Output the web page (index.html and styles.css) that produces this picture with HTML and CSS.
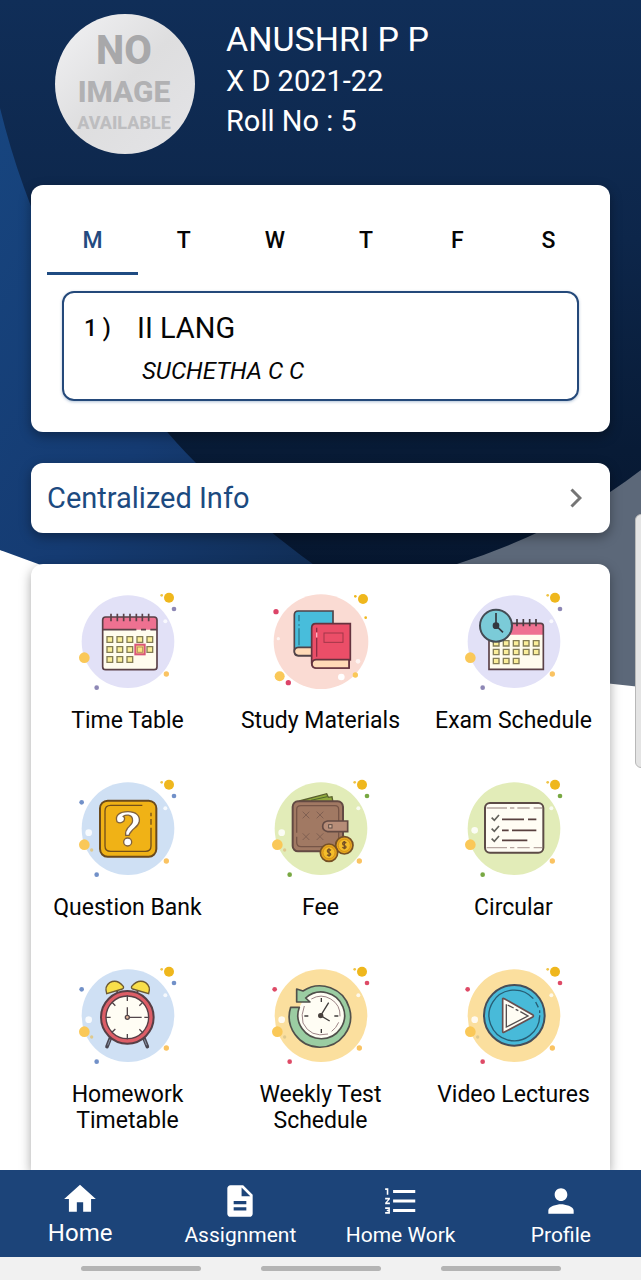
FILE: index.html
```html
<!DOCTYPE html>
<html lang="en">
<head>
<meta charset="utf-8">
<meta name="viewport" content="width=device-width, initial-scale=1">
<title>Student Home</title>
<link rel="stylesheet" href="styles.css">
</head>
<body>
<svg class="defs" aria-hidden="true">
  <defs>
    <symbol id="bubble" viewBox="0 0 420 360" overflow="visible">
      <circle cx="203" cy="176" r="139" fill="var(--disc)"/>
      <circle cx="326" cy="44" r="15" fill="#efb71d"/>
      <circle cx="304" cy="37" r="4" fill="#f0c446"/>
      <circle cx="341" cy="78" r="7" fill="var(--dot)"/>
      <circle cx="315" cy="115" r="6" fill="#fff" opacity=".8"/>
      <circle cx="72" cy="224" r="16" fill="#fac858"/>
      <circle cx="318" cy="273" r="8" fill="#fac362"/>
      <circle cx="109" cy="314" r="7" fill="var(--dot)"/>
    </symbol>
    <symbol id="extras" viewBox="0 0 420 360" overflow="visible">
      <circle cx="85" cy="188" r="10" fill="#fff" opacity=".85"/>
      <circle cx="94" cy="240" r="5" fill="#dfc98e"/>
    </symbol>
  </defs>
</svg>
<div class="app">
  <svg class="backdrop" viewBox="0 0 641 700" preserveAspectRatio="none" aria-hidden="true">
    <defs>
      <linearGradient id="navy" x1="0" y1="0" x2="0" y2="1">
        <stop offset="0" stop-color="#102e58"/><stop offset=".4" stop-color="#0d264a"/><stop offset=".75" stop-color="#081b36"/><stop offset="1" stop-color="#06162e"/>
      </linearGradient>
      <linearGradient id="blue" x1="0" y1="0" x2="1" y2="1">
        <stop offset="0" stop-color="#17457f"/><stop offset=".55" stop-color="#153b72"/><stop offset="1" stop-color="#102b50"/>
      </linearGradient>
    </defs>
    <path d="M330 600V450H641V687Q450 670 330 600Z" fill="#5c6879"/>
    <path d="M0 0H641V470Q563 530 457 564L320 600L0 550Z" fill="url(#navy)"/>
    <path d="M0 108C40 270 120 385 195 462Q260 530 350 590L60 572L0 550Z" fill="url(#blue)"/>
  </svg>

  <main class="content">
    <header class="student">
      <svg class="avatar" viewBox="0 0 140 140" role="img" aria-label="No image available">
        <defs><linearGradient id="silver" x1="0" y1="0" x2="1" y2="1"><stop offset="0" stop-color="#f2f2f4"/><stop offset=".5" stop-color="#dededf"/><stop offset="1" stop-color="#e4e4e7"/></linearGradient></defs>
        <circle cx="70" cy="70" r="70" fill="url(#silver)"/>
        <text class="avatar-no" x="69" y="50">NO</text>
        <text class="avatar-image" x="69" y="88">IMAGE</text>
        <text class="avatar-available" x="69" y="115">AVAILABLE</text>
      </svg>
      <div class="details">
        <h1 class="name">ANUSHRI P P</h1>
        <p class="meta">X D 2021-22</p>
        <p class="meta">Roll No : 5</p>
      </div>
    </header>

    <section class="card schedule">
      <div class="days" role="tablist">
        <button class="day active" role="tab" aria-selected="true">M</button>
        <button class="day" role="tab">T</button>
        <button class="day" role="tab">W</button>
        <button class="day" role="tab">T</button>
        <button class="day" role="tab">F</button>
        <button class="day" role="tab">S</button>
      </div>
      <div class="period">
        <span class="number">1 )</span>
        <div>
          <p class="subject">II LANG</p>
          <p class="teacher">SUCHETHA C C</p>
        </div>
      </div>
    </section>

    <a class="card info" href="#info">
      <span>Centralized Info</span>
      <svg class="chevron" viewBox="0 0 12 20" aria-hidden="true"><path d="M1.500 1.500L10 10L1.500 18.500" fill="none" stroke="#757575" stroke-width="3"/></svg>
    </a>

    <nav class="card menu" aria-label="Menu">
      <a class="tile lilac" href="#timetable">
        <svg class="art" viewBox="-7 9 420 360" aria-hidden="true">
          <use href="#bubble" y="9" width="420" height="360"/>
          <rect x="127" y="111" width="163" height="158" rx="9" fill="#fffcee"/>
          <path d="M127 149V120Q127 111 136 111H281Q290 111 290 120V149Z" fill="#ee7191"/>
          <g fill="none" stroke="#5a4148" stroke-width="5"><rect x="127" y="111" width="163" height="158" rx="9"/><path d="M127 149H228M242 149H257M270 149H290"/><path d="M152 101V124M171 101V124M190 101V124M209 101V124M228 101V124M246 101V124M265 101V124"/></g>
          <g fill="#fbef9b" stroke="#847d55" stroke-width="4"><path d="M140 170h17v17h-17zM170 170h17v17h-17zM200 170h17v17h-17zM230 170h17v17h-17zM260 170h17v17h-17zM140 200h17v17h-17zM170 200h17v17h-17zM200 200h17v17h-17zM260 200h17v17h-17zM140 230h17v17h-17zM170 230h17v17h-17zM200 230h17v17h-17z"/></g>
          <rect x="225" y="194" width="28" height="29" fill="#f9e47d" stroke="#d95678" stroke-width="6"/><rect x="231" y="201" width="16" height="16" fill="none" stroke="#b98b62" stroke-width="3"/>
        </svg>
        <span>Time Table</span>
      </a>
      <a class="tile" href="#materials">
        <svg class="art" viewBox="-13 9 420 360" aria-hidden="true">
          <circle cx="197" cy="185" r="142" fill="#fadbd3"/>
          <g fill="#efb71d"><circle cx="323" cy="57" r="15"/><circle cx="300" cy="49" r="4"/><circle cx="331" cy="113" r="4"/></g>
          <g fill="#dc4468"><circle cx="62" cy="95" r="8"/><circle cx="99" cy="308" r="8"/></g>
          <g fill="#fac858"><circle cx="73" cy="289" r="15"/><circle cx="300" cy="285" r="8"/></g>
          <g fill="#fff"><circle cx="258" cy="291" r="10"/><circle cx="308" cy="244" r="7" opacity=".7"/><circle cx="69" cy="176" r="5" opacity=".7"/></g>
          <path d="M117 212V105Q117 93 129 93H233V202L220 227H128Q117 227 117 212Z" fill="#48bddb" stroke="#514348" stroke-width="5"/>
          <path d="M129 202H225V227H129Q117 225 117 214Q117 203 129 202Z" fill="#ffdab7" stroke="#514348" stroke-width="5"/>
          <path d="M169 250V144Q169 131 181 131H285V240H281V264H181Q169 262 169 250Z" fill="#eb4e68" stroke="#65333f" stroke-width="5"/>
          <path d="M182 239H281V264H182Q170 263 170 251Q170 240 182 239Z" fill="#ffdab7" stroke="#65333f" stroke-width="5"/>
          <path d="M131 105V124M131 133V137M131 145V196" stroke="#2c788d" stroke-width="4"/><path d="M184 143V156M184 174V230" stroke="#912d45" stroke-width="4"/><path d="M184 158V172" stroke="#f8b5c3" stroke-width="4"/>
          <rect x="206" y="159" width="57" height="28" fill="none" stroke="#a13648" stroke-width="3"/>
        </svg>
        <span>Study Materials</span>
      </a>
      <a class="tile lilac" href="#exams">
        <svg class="art" viewBox="-7 9 420 360" aria-hidden="true">
          <use href="#bubble" y="9" width="420" height="360"/>
          <path d="M128 130H283Q291 130 291 138V268H128Z" fill="#fffcee"/><path d="M128 130H283Q291 130 291 138V164H128Z" fill="#ee7191"/><path d="M128 130H283Q291 130 291 138V268H128Z" fill="none" stroke="#5a4148" stroke-width="5"/>
          <path d="M212 117V139M231 117V139M250 117V139M269 117V139" stroke="#443a40" stroke-width="5"/>
          <g fill="#fbef9b" stroke="#847d55" stroke-width="4"><path d="M141 182h17v16h-17zM171 182h17v16h-17zM201 182h17v16h-17zM231 182h17v16h-17zM261 182h17v16h-17zM141 208h17v16h-17zM171 208h17v16h-17zM201 208h17v16h-17zM231 208h17v16h-17zM261 208h17v16h-17zM141 235h17v16h-17zM171 235h17v16h-17zM201 235h17v16h-17z"/></g>
          <circle cx="149" cy="137" r="48" fill="#7bcbd8" stroke="#444b54" stroke-width="6"/><circle cx="149" cy="137" r="10" fill="#343840"/><path d="M149 137V99M149 137L170 157" fill="none" stroke="#343840" stroke-width="5"/>
        </svg>
        <span>Exam Schedule</span>
      </a>
      <a class="tile sky" href="#questions">
        <svg class="art" viewBox="-7 0 420 360" aria-hidden="true">
          <use href="#bubble" width="420" height="360"/><use href="#extras" width="420" height="360"/>
          <circle cx="64" cy="97" r="7" fill="#7190c8"/>
          <rect x="119" y="92" width="169" height="168" rx="23" fill="#f0b216" stroke="#6b4a1c" stroke-width="6"/>
          <path d="M246 106H151Q134 106 134 123V228Q134 244 151 244H255Q272 244 272 228V173M272 128V139M272 147V164" fill="none" stroke="#74501a" stroke-width="4"/>
          <path d="M170 155C163 136 178 125 203 125C227 125 239 137 237 154C235 169 222 173 214 183Q207 191 206 196H196Q194 184 203 173C213 162 219 159 216 145C213 134 197 133 189 139Q196 143 190 154Q180 163 170 155Z" fill="#fff" stroke="#80613c" stroke-width="4"/><circle cx="202" cy="216" r="12" fill="#fff" stroke="#80613c" stroke-width="4"/>
        </svg>
        <span>Question Bank</span>
      </a>
      <a class="tile lime" href="#fee">
        <svg class="art" viewBox="-13 0 420 360" aria-hidden="true">
          <use href="#bubble" x="-6" width="420" height="360"/><use href="#extras" x="-6" width="420" height="360"/>
          <path d="M132 93L214 71L219 82L230 80L233 97Z" fill="#91aa3c" stroke="#59602d" stroke-width="4"/><path d="M167 91L216 80" stroke="#4e672d" stroke-width="3"/>
          <rect x="112" y="94" width="151" height="150" rx="16" fill="#a17963" stroke="#634a43" stroke-width="6"/>
          <path d="M124 188V119Q124 107 137 107H239Q250 107 250 119V155M250 187V220Q250 230 239 230H137Q124 230 124 217V200" fill="none" stroke="#765547" stroke-width="4"/>
          <path d="M142 125L162 145M162 125L142 145M184 125L204 145M204 125L184 145M142 190L162 210M162 190L142 210M184 190L204 210M204 190L184 210" stroke="#806052" stroke-width="3"/>
          <path d="M217 153H277V185H217Q202 182 202 169Q202 156 217 153Z" fill="#b78d78" stroke="#634a43" stroke-width="5"/><rect x="220" y="164" width="10" height="10" fill="#d9b49d" stroke="#5d4c44" stroke-width="3"/>
          <g stroke="#765125" stroke-width="5"><circle cx="267" cy="226" r="26" fill="#e6a51e"/><circle cx="221" cy="248" r="26" fill="#e6a51e"/></g>
          <g fill="#f4bd2b" stroke="#c98716" stroke-width="2"><circle cx="267" cy="226" r="18"/><circle cx="221" cy="248" r="18"/></g>
          <path id="cash" d="M273 219Q263 212 262 221Q262 225 267 226Q273 228 272 232Q268 238 261 232M267 213V238" fill="none" stroke="#765125" stroke-width="4"/><use href="#cash" x="-46" y="22"/>
        </svg>
        <span>Fee</span>
      </a>
      <a class="tile lime" href="#circular">
        <svg class="art" viewBox="-7 0 420 360" aria-hidden="true">
          <use href="#bubble" width="420" height="360"/><circle cx="85" cy="181" r="10" fill="#fff" opacity=".85"/>
          <rect x="116" y="99" width="175" height="149" rx="15" fill="#fffdf4" stroke="#5c4b46" stroke-width="6"/>
          <path d="M121 114H182M191 114H204M213 114H250M262 114H287M121 233H182M191 233H204M213 233H250M262 233H287" stroke="#b6a6a0" stroke-width="4"/>
          <path d="M136 143L144 151L158 135M136 176L144 184L158 168M136 206L144 214L158 198" fill="none" stroke="#62605a" stroke-width="5"/><path d="M167 148H233M245 148H270M167 181H187M197 181H270M167 211H243" stroke="#59413f" stroke-width="5"/>
        </svg>
        <span>Circular</span>
      </a>
      <a class="tile sky" href="#homework-timetable">
        <svg class="art" viewBox="-7 0 420 360" aria-hidden="true">
          <use href="#bubble" width="420" height="360"/><use href="#extras" width="420" height="360"/><circle cx="64" cy="97" r="7" fill="#7190c8"/>
          <path d="M151 241L140 269M250 241L261 269" stroke="#4a4651" stroke-width="11" stroke-linecap="round"/><path d="M149 247L142 265M252 247L259 265" stroke="#8792a4" stroke-width="3"/>
          <path d="M169 100L173 111M233 100L228 111" stroke="#51454a" stroke-width="5"/>
          <path d="M139 110Q132 88 148 77Q170 65 189 88Q191 94 186 96ZM265 110Q272 88 256 77Q234 65 214 88Q212 94 217 96Z" fill="#f8df4a" stroke="#6d5a31" stroke-width="4"/>
          <circle cx="201" cy="181" r="72" fill="#fffdf4" stroke="#573f46" stroke-width="20"/><circle cx="201" cy="181" r="71" fill="none" stroke="#dd5e67" stroke-width="10"/>
          <path d="M201 115V132M201 231V247M137 181H151M252 181H266M155 136L165 146M237 217L248 228M155 226L165 216M237 146L248 135M201 181V151M201 181H244" stroke="#52454a" stroke-width="4"/><circle cx="201" cy="181" r="6" fill="#e6b99c" stroke="#52454a" stroke-width="4"/>
        </svg>
        <span>Homework<br>Timetable</span>
      </a>
      <a class="tile sand" href="#tests">
        <svg class="art" viewBox="-13 0 420 360" aria-hidden="true">
          <use href="#bubble" x="-6" width="420" height="360"/><use href="#extras" x="-6" width="420" height="360"/><circle cx="58" cy="97" r="7" fill="#de4a66"/>
          <circle cx="198" cy="175" r="70" fill="#fffdf4"/>
          <path d="M105 151A93 92 0 1 0 147 98L124 96V135H164L151 123A70 70 0 1 1 130 151Z" fill="none"/>
          <path d="M106 151A92 92 0 1 0 143 102L124 96V135H164L151 123A70 70 0 1 1 132 151Z" fill="#9bcda2" stroke="#50504b" stroke-width="5" stroke-linejoin="round"/>
          <path d="M168 126A57 57 0 0 1 254 178M250 196Q242 214 229 223M218 231Q165 243 143 198Q136 174 147 147" fill="none" stroke="#9d8486" stroke-width="3"/>
          <path d="M198 123V135M198 216V228M147 177H159M237 177H249M196 176L220 137M196 176L223 192" stroke="#403c3b" stroke-width="4"/><circle cx="196" cy="176" r="8" fill="#48403c"/>
        </svg>
        <span>Weekly Test<br>Schedule</span>
      </a>
      <a class="tile sand" href="#videos">
        <svg class="art" viewBox="-7 0 420 360" aria-hidden="true">
          <use href="#bubble" width="420" height="360"/><use href="#extras" width="420" height="360"/><circle cx="64" cy="97" r="7" fill="#de4a66"/>
          <circle cx="204" cy="175" r="91" fill="#48bad9" stroke="#454e59" stroke-width="6"/>
          <path d="M261 125A76 76 0 1 0 280 175M268 135L276 151M280 160V168" fill="none" stroke="#275d74" stroke-width="4"/>
          <path d="M169 125Q170 123 174 125L260 174Q263 177 259 180L173 226Q169 228 169 222Z" fill="#fffdf4" stroke="#684f50" stroke-width="5"/><path d="M184 144L202 153M208 157L216 161M222 164L245 177L180 210V142" fill="none" stroke="#544f50" stroke-width="4"/>
        </svg>
        <span>Video Lectures</span>
      </a>
    </nav>
  </main>

  <nav class="bottom-nav" aria-label="Primary">
    <a class="nav-item current" href="#home"><svg class="nav-icon" viewBox="0 0 24 24" aria-hidden="true"><path d="M10 20v-6h4v6h5v-8h3L12 3 2 12h3v8z"/></svg><span>Home</span></a>
    <a class="nav-item" href="#assignment"><svg class="nav-icon" viewBox="0 0 24 24" aria-hidden="true"><path d="M14 2H6c-1.100 0-2 .9-2 2v16c0 1.100.9 2 2 2h12c1.100 0 2-.9 2-2V8l-6-6zm2 16H8v-2h8v2zm0-4H8v-2h8v2zm-3-5V3.500L18.500 9H13z"/></svg><span>Assignment</span></a>
    <a class="nav-item" href="#homework"><svg class="nav-icon" viewBox="0 0 24 24" aria-hidden="true"><path d="M2 17h2v.5H3v1h1v.5H2v1h3v-4H2v1zm1-9h1V4H2v1h1v3zm-1 3h1.800L2 13.100v.9h3v-1H3.200L5 10.900V10H2v1zm5-6v2h14V5H7zm0 14h14v-2H7v2zm0-6h14v-2H7v2z"/></svg><span>Home Work</span></a>
    <a class="nav-item" href="#profile"><svg class="nav-icon" viewBox="0 0 24 24" aria-hidden="true"><path d="M12 12c2.210 0 4-1.790 4-4s-1.790-4-4-4-4 1.790-4 4 1.790 4 4 4zm0 2c-2.670 0-8 1.340-8 4v2h16v-2c0-2.660-5.330-4-8-4z"/></svg><span>Profile</span></a>
  </nav>
  <div class="system-bar"><i class="handle"></i><i class="handle"></i><i class="handle"></i></div>
  <div class="edge-panel"></div>
</div>
</body>
</html>
```
FILE: styles.css
```css
* { box-sizing: border-box; }
body { margin: 0; font-family: Roboto, "Liberation Sans", sans-serif; color: #050505; background: #fff; }
h1, p { margin: 0; font-weight: 400; }
a { color: inherit; text-decoration: none; }
.defs { position: absolute; width: 0; height: 0; }
.app { position: relative; display: flex; flex-direction: column; height: 100vh; overflow: hidden; }
.backdrop { position: absolute; top: 0; left: 0; width: 100%; height: 700px; }
.content { position: relative; flex: 1; min-height: 0; overflow: hidden; display: flex; flex-direction: column; padding: 14px 31px 0; }

.student { display: flex; gap: 31px; padding-left: 24px; margin-bottom: 31px; color: #fff; }
.avatar { width: 140px; height: 140px; flex: none; }
.avatar text { font-weight: 800; fill: #b1b1b3; text-anchor: middle; }
.avatar .avatar-no { font-size: 40px; fill: #a8a8aa; }
.avatar .avatar-image { font-size: 30px; }
.avatar .avatar-available { font-size: 18px; fill: #bdbdbf; }
.details { padding-top: 4px; }
.name { font-size: 34px; line-height: 43px; }
.meta { font-size: 29px; line-height: 40px; }

.card { flex: none; background: #fff; border-radius: 12px; box-shadow: 0 4px 12px rgba(0, 0, 0, .35); }
.schedule { padding: 16px 16px 31px; margin-bottom: 31px; }
.days { display: grid; grid-template-columns: repeat(6, 1fr); margin-bottom: 16px; }
.day { height: 74px; padding: 8px 0 0; border: 0; border-bottom: 3px solid transparent; background: none; font: 500 23px/28px Roboto, sans-serif; color: #050505; }
.day.active { color: #244a80; border-color: #1f4b82; }
.period { display: flex; margin: 0 15px; padding: 16px 20px 10px; border: 2px solid #24497a; border-radius: 12px; box-shadow: 0 1px 3px rgba(30, 80, 140, .35); }
.number { width: 53px; padding-top: 6px; font-size: 23px; line-height: 28px; font-weight: 500; }
.subject { font-size: 29px; line-height: 38px; }
.teacher { padding: 6px 0 0 5px; font-size: 24px; line-height: 36px; font-style: italic; }

.info { display: flex; align-items: center; justify-content: space-between; min-height: 70px; padding: 0 28px 0 16px; margin-bottom: 31px; font-size: 29px; color: #1c4a80; }
.chevron { width: 12px; height: 20px; }

.menu { flex: 1 0 auto; display: grid; grid-template-columns: repeat(3, 1fr); grid-auto-rows: 187px; padding-top: 19px; border-radius: 12px 12px 0 0; }
.tile { display: flex; flex-direction: column; align-items: center; gap: 5px; font-size: 23px; line-height: 26px; text-align: center; }
.art { width: 140px; height: 120px; }
.lilac { --disc: #e2e1f7; --dot: #8d87b5; }
.sky { --disc: #cfe0f4; --dot: #7190c8; }
.lime { --disc: #e2ecb8; --dot: #78a842; }
.sand { --disc: #fbdf9e; --dot: #de4a66; }

.bottom-nav { position: relative; flex: none; display: grid; grid-template-columns: repeat(4, 1fr); height: 87px; background: #1c4479; color: #fff; }
.nav-item { display: flex; flex-direction: column; align-items: center; padding-top: 12px; font-size: 21px; line-height: 30px; }
.nav-item.current { padding-top: 10px; font-size: 24px; }
.nav-icon { width: 38px; height: 38px; fill: #fff; }
.system-bar { position: relative; flex: none; display: flex; justify-content: center; align-items: center; gap: 60px; height: 23px; background: #f1f1f1; }
.handle { width: 120px; height: 5px; border-radius: 3px; background: #b4b4b4; }
.edge-panel { position: absolute; top: 514px; right: -6px; width: 12px; height: 254px; border: 1px solid #b8b8b8; border-radius: 8px; background: #e4e4e4; }
```
